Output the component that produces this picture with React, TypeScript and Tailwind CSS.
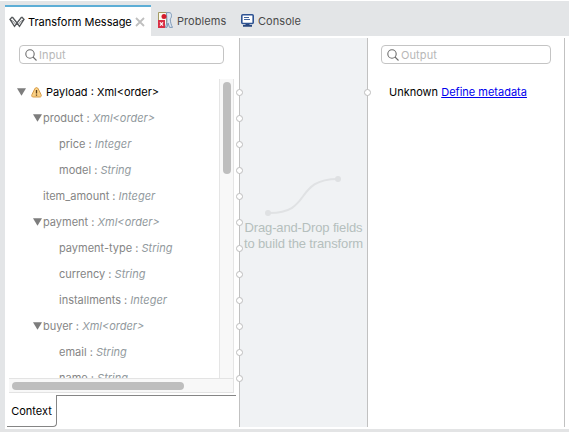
import React from 'react';

type Field = { name: string; type: string; indent: string; open?: boolean };

const fields: Field[] = [
  { name: 'product', type: 'Xml<order>', indent: 'pl-6', open: true },
  { name: 'price', type: 'Integer', indent: 'pl-[50px]' },
  { name: 'model', type: 'String', indent: 'pl-[50px]' },
  { name: 'item_amount', type: 'Integer', indent: 'pl-[34px]' },
  { name: 'payment', type: 'Xml<order>', indent: 'pl-6', open: true },
  { name: 'payment-type', type: 'String', indent: 'pl-[50px]' },
  { name: 'currency', type: 'String', indent: 'pl-[50px]' },
  { name: 'installments', type: 'Integer', indent: 'pl-[50px]' },
  { name: 'buyer', type: 'Xml<order>', indent: 'pl-6', open: true },
  { name: 'email', type: 'String', indent: 'pl-[50px]' },
  { name: 'name', type: 'String', indent: 'pl-[50px]' },
];

function Arrow() {
  return (
    <svg className="shrink-0" width="9" height="8" viewBox="0 0 9 8">
      <path d="M0 .3h9L4.5 7.8z" fill="#7d7d7d" />
    </svg>
  );
}

function Logo() {
  return (
    <svg width="16" height="12" viewBox="0 0 16 12" fill="none" stroke="#55585b" strokeWidth="1.3">
      <path d="M3.300 1 1 3.400l4.500 7L8 7l2.500 3.400 4.500-7L12.700 1" />
      <path d="M3.300 1 8 7l4.700-6M1 3.400 3.200 5.600M15 3.400l-2.200 2.200" />
      <path d="m3.500 4.500 3.300 4M12.500 4.500l-3.300 4" strokeWidth=".7" />
    </svg>
  );
}

function Warning() {
  return (
    <svg className="shrink-0" width="11" height="11" viewBox="0 0 11 11">
      <path d="M5.500.6c.9 0 1.400.6 1.800 1.400l2.700 5.500c.7 1.500.2 2.500-1.200 2.500H2.200C.8 10 .3 9 1 7.500L3.700 2C4.100 1.200 4.600.6 5.500.6z" fill="#fad084" stroke="#d59b49" />
      <path d="M5.500 3v3.500M5.500 7.500v1.300" stroke="#5b3f1b" strokeWidth="1.300" />
    </svg>
  );
}

function ProblemsIcon() {
  return (
    <svg width="15" height="16" viewBox="0 0 15 16">
      <path d="M.5 8V.5h8V15H7" fill="#fbf9ed" stroke="#a39a63" />
      <path d="M8.500.6h2.500c2 0 2.500 1.200 2.500 3 0 1.800-.6 2.600-1.300 3.400.3 3 .8 5.800 2.300 8.400h-3l-1.500-4.500-1 4.500H7.500l1.500-6z" fill="#dce6f1" stroke="#7f9ab8" />
      <circle cx="6" cy="4.500" r="2.500" fill="#d51c2c" />
      <path d="M0 8h7v8H0z" fill="#d92f45" />
      <path d="m2 10.300 3 3.400m0-3.400-3 3.400" stroke="#fff" strokeWidth="1.200" />
    </svg>
  );
}

function ConsoleIcon() {
  return (
    <svg width="13" height="13" viewBox="0 0 13 13">
      <rect x=".8" y=".8" width="11.400" height="8.700" rx="1" fill="#fff" stroke="#2e5393" strokeWidth="1.600" />
      <path d="M3 3.500h5M3 5.500h6" stroke="#41639c" />
      <path d="M4.500 10h4v1H11v1.800H2V11h2.500z" fill="#28477f" />
    </svg>
  );
}

function Search({ label, width }: { label: string; width: string }) {
  return (
    <div className={`flex h-[19px] items-center rounded border border-[#c4c4c4] bg-white pl-[5px] ${width}`}>
      <svg width="12" height="12" viewBox="0 0 12 12" fill="none" stroke="#6d6d6d" strokeWidth="1.100">
        <circle cx="5" cy="5" r="4.200" />
        <path d="m8 8 3.500 3.500" />
      </svg>
      <span className="ml-[2px] pt-px text-[11px] leading-4 tracking-[0.1px] text-[#b7b7b7]">{label}</span>
    </div>
  );
}

function Port({ top }: { top: number }) {
  return <i className="absolute -left-[4px] size-[7px] rounded-full border border-[#bdbdbd] bg-white" style={{ top }} />;
}

export default function App() {
  return (
    <div className="flex h-[432px] w-[569px] flex-col overflow-hidden bg-white pt-px font-['Inter','Liberation_Sans',sans-serif] text-[11px] text-black">
      <header className="flex h-[35px] shrink-0 bg-[#e3e5e7] pl-[5px] text-[#4a4a4a]">
        <div className="mt-1 flex h-[31px] w-[146px] items-center border-t-2 border-[#5daed6] bg-white pl-1 text-black">
          <Logo />
          <span className="ml-[3px] w-[104px] whitespace-nowrap pt-px tracking-[0px]">Transform Message</span>
          <svg className="ml-[3px]" width="10" height="10" viewBox="0 0 10 10" stroke="#bfbfbf" strokeWidth="1.800">
            <path d="m1 1 8 8m0-8L1 9" />
          </svg>
        </div>
        <div className="ml-[7px] mt-[3px] flex h-8 items-center">
          <ProblemsIcon />
          <span className="ml-1 w-[64px] pt-[2px] tracking-[0.050px]">Problems</span>
          <ConsoleIcon />
          <span className="ml-1 pt-[2px] tracking-[0.050px]">Console</span>
        </div>
      </header>

      <main className="flex h-[393px] shrink-0 border-l-[5px] border-[#e3e5e7] pb-[2px] pt-[2px]">
        <section className="flex w-[234px] shrink-0 flex-col">
          <div className="pl-[14px] pt-[7px]"><Search label="Input" width="w-[205px]" /></div>
          <div className="ml-1 mt-[15px] h-[314px] w-[225px]">
            <div className="flex h-[299px]">
              <div className="w-[210px] overflow-hidden whitespace-nowrap">
                <div className="flex h-[26px] items-center pl-2">
                  <Arrow />
                  <span className="ml-[5px]"><Warning /></span>
                  <span className="ml-1 pt-px tracking-[0px]">Payload : Xml&lt;order&gt;</span>
                </div>
                {fields.map((f) => (
                  <div key={f.name} className={`flex h-[26px] items-center text-[#858585] ${f.indent}`}>
                    {f.open && <Arrow />}
                    <span className={f.open ? 'ml-px pt-px' : 'pt-px'}>
                      {f.name} : <em className="text-[#929a9e]">{f.type}</em>
                    </span>
                  </div>
                ))}
              </div>
              <div className="w-[15px] border-x border-[#e5e5e5] bg-[#f8f8f8] pl-[3px] pt-[3px]">
                <div className="h-[92px] w-2 rounded-full bg-[#bebebe]" />
              </div>
            </div>
            <div className="h-[15px] border-y border-r border-[#e3e3e3] bg-[#f8f8f8] pl-[3px] pt-[3px]">
              <div className="h-2 w-[172px] rounded-full bg-[#bebebe]" />
            </div>
          </div>
          <div className="ml-[2px] mt-[2px] flex h-8">
            <div className="flex w-[50px] items-center justify-center rounded-br border-b border-r border-[#858585] pt-[2px]">Context</div>
            <div className="w-[179px] border-t border-[#858585]" />
          </div>
        </section>

        <section className="relative flex w-[128px] shrink-0 flex-col items-center border-l border-[#c1c1c1] bg-[#f0f2f4] pt-[137px]">
          {[92, 118, 144, 170, 196, 222, 248, 274, 300, 326, 352, 378].map((y) => (
            <Port key={y} top={y - 41} />
          ))}
          <svg className="-ml-px" width="78" height="41" viewBox="0 0 78 41" fill="none">
            <path d="M4 38C49 39 29 4 74 4" stroke="#e0e2e4" strokeWidth="2" />
            <circle cx="4" cy="38" r="3" fill="#dfe1e3" />
            <circle cx="74" cy="4" r="3" fill="#dfe1e3" />
          </svg>
          <p className="mt-1 whitespace-nowrap text-center font-['Liberation_Sans',sans-serif] text-[13px] leading-4 tracking-[-0.140px] text-[#b5bfbd]">
            Drag-and-Drop fields<br />to build the transform
          </p>
        </section>

        <section className="relative w-[198px] shrink-0 border-x border-[#c1c1c1] pl-[13px] pt-[7px]">
          <Port top={51} />
          <Search label="Output" width="w-[170px]" />
          <div className="ml-2 mt-[20px] whitespace-nowrap leading-[16px]">
            Unknown <a className="text-[#0000ee] underline">Define metadata</a>
          </div>
        </section>
      </main>
      <footer className="h-[3px] shrink-0 bg-[#e3e4e5]" />
    </div>
  );
}
